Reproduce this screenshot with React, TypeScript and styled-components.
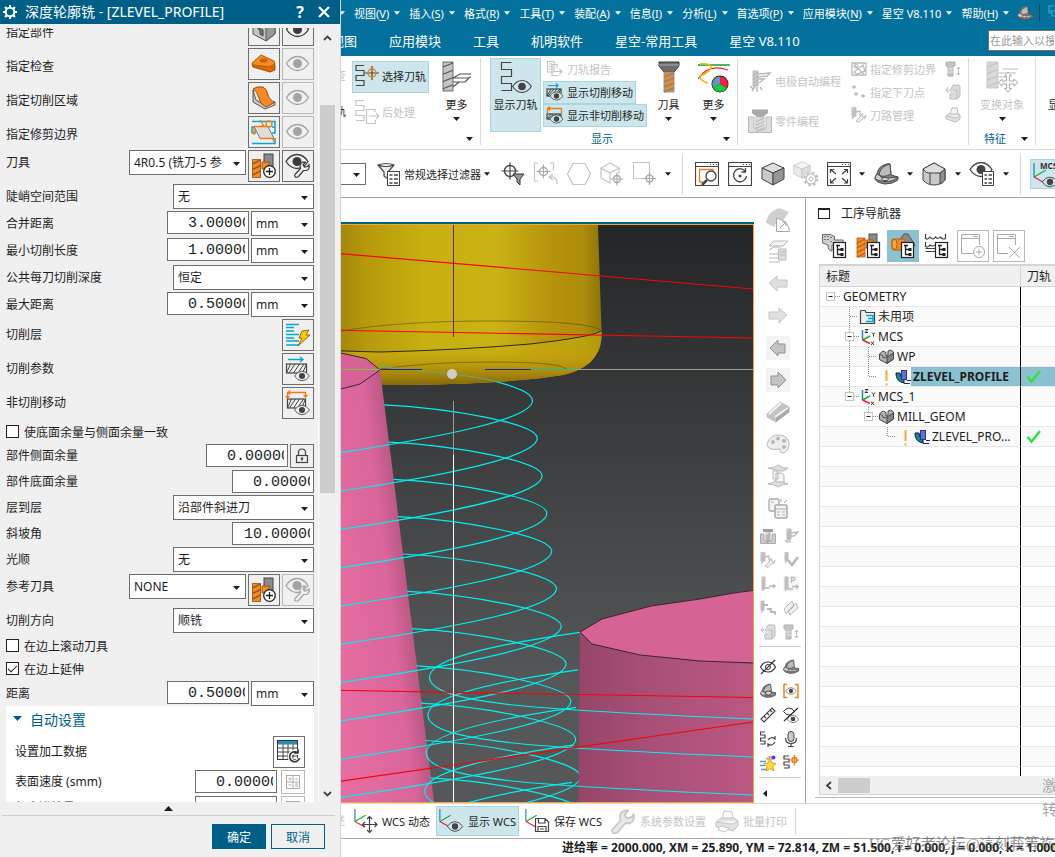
import React from 'react';
import styled, { createGlobalStyle, css } from 'styled-components';

const ui = `"Noto Sans", "Noto Sans CJK SC", sans-serif`;
const dim = '#c4c4c4';
const teal = '#005f87';
const orange = '#ee7d11';
const cyan = '#00a9cf';

const Global = createGlobalStyle`
  *, *::before, *::after { box-sizing: border-box; }
  body { margin: 0; background: #fff; font-family: ${ui}; font-size: 12px; color: #1e1e1e; }
  button, input, select { font-family: inherit; font-size: inherit; color: inherit; margin: 0; border-radius: 0; }
  svg { display: block; flex: none; }
`;

/* ---------- shared drawings ---------- */

const Svg = ({ w, h = w, vb, children }: { w: number; h?: number; vb?: string; children: React.ReactNode }) => (
  <svg width={w} height={h} viewBox={vb || `0 0 ${w} ${h}`} fill="none" aria-hidden="true">
    {children}
  </svg>
);

const Caret = ({ c = '#1e1e1e', w = 7 }: { c?: string; w?: number }) => (
  <Svg w={w} h={4} vb="0 0 7 4"><path d="M0 0H7L3.500 4Z" fill={c} /></Svg>
);

const Eye = ({ x = 0, y = 0, s = 1, c = '#444', bg = 'none' }: { x?: number; y?: number; s?: number; c?: string; bg?: string }) => (
  <g transform={`translate(${x} ${y}) scale(${s})`}>
    <path d="M-11 0Q-6.500-7 0-7Q6.500-7 11 0Q6.500 7 0 7Q-6.500 7-11 0Z" stroke={c} strokeWidth="1.300" fill={bg} />
    <circle r="4.500" fill={c} />
  </g>
);

const Wrench = ({ x = 0, y = 0, s = 1, c = '#444', f = '#f0f0f0' }: { x?: number; y?: number; s?: number; c?: string; f?: string }) => (
  <g transform={`translate(${x} ${y}) scale(${s})`}>
    <path d="M1 13.500L6.500 7.500Q5 3 8.500 1.200L11.500 1L9 4L10.500 6.200L14 5.200L15 3.500Q16 8 12.500 9.500L9.500 9.500L4.500 15.500Q2.500 17 1 15.500Q0.300 14.500 1 13.500Z" fill={f} stroke={c} strokeWidth="1.200" strokeLinejoin="round" />
  </g>
);

const SPath = ({ x = 0, y = 0, w = 8, h = 20, c = '#444' }: { x?: number; y?: number; w?: number; h?: number; c?: string }) => (
  <path d={`M${x + w} ${y}H${x}V${y + h / 4}H${x + w}V${y + h / 2}H${x}V${y + (3 * h) / 4}H${x + w}V${y + h}H${x}`} stroke={c} strokeWidth="1.200" />
);

const Target = ({ x, y, r = 4, c = '#444', d = '#444' }: { x: number; y: number; r?: number; c?: string; d?: string }) => (
  <g>
    <path d={`M${x - r - 3} ${y}H${x + r + 3}M${x} ${y - r - 3}V${y + r + 3}`} stroke={d} strokeWidth="1.200" />
    <circle cx={x} cy={y} r={r} stroke={c} strokeWidth="1.400" />
  </g>
);

const Hatch = ({ x, y, w, h, c = '#444' }: { x: number; y: number; w: number; h: number; c?: string }) => (
  <g>
    <rect x={x} y={y} width={w} height={h} stroke={c} strokeWidth="1.200" />
    {[0, 1, 2, 3, 4].map((i) => {
      const a = x + 3 + (i * (w - 2)) / 4;
      return <path key={i} d={`M${Math.min(a + 1, x + w)} ${y}L${Math.max(a - 5, x)} ${y + h}`} stroke={c} />;
    })}
  </g>
);

const Cube = ({ x = 0, y = 0, s = 1, a = '#c9c9c9', b = '#969696', d = '#dedede', c = '#444' }: { x?: number; y?: number; s?: number; a?: string; b?: string; d?: string; c?: string }) => (
  <g transform={`translate(${x} ${y}) scale(${s})`} stroke={c} strokeWidth="1" strokeLinejoin="round">
    <path d="M1 6L12 1L23 6L12 11Z" fill={d} />
    <path d="M1 6L12 11V23L1 17Z" fill={a} />
    <path d="M23 6L12 11V23L23 17Z" fill={b} />
  </g>
);

const Shoe = ({ x = 0, y = 0, s = 1 }: { x?: number; y?: number; s?: number }) => (
  <g transform={`translate(${x} ${y}) scale(${s})`} stroke="#4a4a4a" strokeWidth="1" strokeLinejoin="round">
    <path d="M1 17Q1 14 3 12Q4 5 10 3Q14 1 16 2L17 13L24 15V18Q19 22 11 22Q3 21 1 17Z" fill="#858585" />
    <path d="M5 13Q6 6 12 3.500L16 2L17 12Q10 16 5 13Z" fill="#bcbcbc" />
    <path d="M3 12L5 13Q8 17 14 16L24 15Q19 20 11 19.500Q4 19 1 17Q1 14 3 12Z" fill="#cecece" />
    <ellipse cx="11" cy="17" rx="3.500" ry="1.500" fill="#e4e4e4" />
  </g>
);

const Drill = ({ x = 0, y = 0, w = 8, h = 22, f = '#c4c4c4', l = '#555', t = 1.2 }: { x?: number; y?: number; w?: number; h?: number; f?: string; l?: string; t?: number }) => (
  <g>
    <rect x={x} y={y} width={w} height={h} fill={f} stroke={l} strokeWidth="0.800" />
    {[0, 1, 2, 3].map((i) => (
      <path key={i} d={`M${x} ${y + 5 + (i * h) / 4}L${x + w} ${y + (i * h) / 4 + 1}`} stroke={l} strokeWidth={t} />
    ))}
  </g>
);

const Box4 = ({ x = 12, y = 12 }: { x?: number; y?: number }) => (
  <g>
    <rect x={x - 0.5} y={y - 0.5} width="12" height="15" fill="#fff" stroke="#222" strokeWidth="1.200" />
    <path d={`M${x + 2} ${y + 2.5}h4M${x + 3.5} ${y + 2.5}v9h4M${x + 3.5} ${y + 6.5}h4`} stroke="#222" strokeWidth="1.300" />
    <rect x={x + 6.5} y={y + 5} width="3" height="3" fill="#222" />
    <rect x={x + 6.5} y={y + 10} width="3" height="3" fill="#222" />
  </g>
);

const Axes = ({ x = 0, y = 0, s = 1 }: { x?: number; y?: number; s?: number }) => (
  <g transform={`translate(${x} ${y}) scale(${s})`} strokeWidth="1.300">
    <path d="M1 0V14" stroke="#2a87a8" />
    <path d="M1 14L13 7" stroke="#1fae3c" />
    <path d="M1 14L12 20" stroke="#ee1c3c" />
  </g>
);

const Printer = ({ c = '#c4c4c4', f = '#e2e2e2' }: { c?: string; f?: string }) => (
  <Svg w={24}>
    <path d="M7 11L9 2L17 3L18 10" fill="#fff" stroke={c} />
    <path d="M1 13L6 9H19L23 12V17L18 22L1 18Z" fill={f} stroke={c} />
    <path d="M1 13L17 15L23 12M5 17L14 19L10 23L3 21Z" fill="#fff" stroke={c} />
  </Svg>
);

/* ---------- dialog icons (30px) ---------- */

const D = ({ children }: { children: React.ReactNode }) => <Svg w={30} vb="1 1 30 30">{children}</Svg>;

const icoEye = (c = '#3c3c3c') => <D><Eye x={15.5} y={15.5} c={c} /></D>;
const icoPart = (
  <D>
    <path d="M5 8L16 3L27 8V20L18 27L5 20Z" fill="#c4c4c4" stroke="#555" />
    <path d="M18 13L27 8V20L18 27Z" fill="#9a9a9a" stroke="#555" />
    <path d="M9 13L15 16V22L12 20V17Z" fill="#777" stroke="#444" />
  </D>
);
const icoCheck = (
  <D>
    <path d="M4 16L13 8L25 14L27 17V22L22 24L5 19Z" fill="#d96a00" stroke="#a94f00" />
    <path d="M4 15L13 7L26 13L27 16L21 19L5 17Z" fill="#f58a1f" stroke="#b85a05" />
    <ellipse cx="15.500" cy="12.500" rx="4" ry="2" fill="#c96000" />
  </D>
);
const icoArea = (
  <D>
    <path d="M5 8V20L17 27L27 23V20L18 24L8 18Z" fill="#c9c9c9" stroke="#555" />
    <path d="M5 7Q8 4 15 5Q19 7 20 13Q22 19 27 20L18 25Q12 22 11 16Q9 9 5 7Z" fill="#f58a1f" stroke="#a94f00" />
  </D>
);
const icoTrim = (
  <D>
    <path d="M4 5.500H27V11M4 17V11H8M4 17H8M4 27.500H27V22M24 11H27V17H24" stroke={cyan} strokeWidth="1.500" />
    <path d="M12 4L27 27M4 18L15 9M6 10V19" stroke={orange} strokeWidth="1.300" />
    <path d="M6 10.500H20L26 22.500H12Z" fill="#dcdcdc" stroke="#777" />
    <path d="M6 10.500H20M12 22.500H26" stroke={orange} strokeWidth="1.300" />
    <circle cx="21" cy="8" r="3" stroke={orange} strokeWidth="1.300" />
  </D>
);
const icoTools = (
  <D>
    <rect x="16" y="4" width="9" height="14" fill="#8b8b8b" stroke="#444" />
    <path d="M14 12H21V19H14Z" fill="#f58a1f" stroke="#a94f00" />
    <rect x="4.500" y="9.500" width="8" height="18" fill="#f58a1f" stroke="#b3621a" />
    <path d="M4.500 14L12.500 10M4.500 19.500L12.500 15.500M4.500 25L12.500 21" stroke="#8a5a30" strokeWidth="1.500" />
    <circle cx="21.500" cy="21.500" r="5.800" fill="#fff" stroke="#222" strokeWidth="1.300" />
    <path d="M18 21.500h7M21.500 18v7" stroke="#222" strokeWidth="1.300" />
  </D>
);
const icoEyeWrench = (c = '#3c3c3c') => <D><Eye x={15} y={11.5} c={c} /><Wrench x={12} y={11} c={c} /></D>;
const icoLayers = (
  <D>
    <path d="M4 5.500H17M4 8.500H12M4 12H12M4 15.500H17M4 19H12M4 22H17M4 26H17" stroke={cyan} strokeWidth="1.500" />
    <path d="M20 12L27 11L24 16L28 16L16 27L20 19L17 19Z" fill="#ffc60a" stroke="#8b6a10" />
  </D>
);
const icoCut = (
  <D>
    <path d="M6 6.500H21M18 4L21 6.500L18 9" stroke={cyan} strokeWidth="1.400" />
    <Hatch x={4.5} y={11} w={20} h={9} />
    <Eye x={20} y={23} s={0.68} bg="#f0f0f0" />
  </D>
);
const icoNonCut = (
  <D>
    <path d="M5.500 11V5.500H23.500V10M8 3.500L6 5.500L8 7.500M3.500 9L5.500 11L7.500 9M21.500 8L23.500 10L25.500 8" stroke={orange} strokeWidth="1.300" />
    <Hatch x={5.5} y={12} w={18} h={9} />
    <Eye x={20} y={23} s={0.68} bg="#f0f0f0" />
  </D>
);
const icoTable = (
  <D>
    <rect x="4.500" y="4.500" width="20" height="19" fill="#fff" stroke="#333" />
    <rect x="5" y="5" width="19" height="3.500" fill="#2290b5" />
    <path d="M5 12H24M5 16H24M5 20H24M10 8V24M15 8V24M20 8V24" stroke="#444" />
    <path d="M25 17A5 5 0 1 0 26.500 22M25 13V17H21" stroke="#fff" strokeWidth="4" />
    <path d="M25 17A5 5 0 1 0 26.500 22M25 13V17H21" stroke="#333" strokeWidth="1.600" />
  </D>
);

/* ---------- dialog ---------- */

const Shell = styled.div`
  display: flex;
  height: 100vh;
  overflow: hidden;
`;

const Dialog = styled.section`
  flex: none;
  width: 341px;
  display: flex;
  flex-direction: column;
  background: #f0f0f0;
  border-right: 1px solid #d4d4d4;
  z-index: 1;
`;

const TitleBar = styled.header`
  height: 24px;
  flex: none;
  display: flex;
  align-items: center;
  gap: 8px;
  padding: 0 8px 0 3px;
  background: ${teal};
  color: #fff;
`;

const Title = styled.h1`
  margin: 0;
  flex: 1;
  font-size: 14px;
  line-height: 24px;
  font-weight: 400;
  white-space: nowrap;
`;

const TitleButton = styled.button`
  width: 16px;
  height: 24px;
  padding: 0;
  border: 0;
  background: none;
  color: #fff;
  font-size: 16px;
  font-weight: 700;
  line-height: 24px;
  display: grid;
  place-items: center;
`;

const DialogBody = styled.div`
  flex: 1;
  min-height: 0;
  margin-top: 4px;
  display: flex;
`;

const FormClip = styled.div`
  flex: 1;
  padding: 0 4px 0 6px;
  overflow: hidden;
  border-right: 1px solid #fff;
`;

const Form = styled.div`
  margin-top: -14px;
`;

const Row = styled.div<{ $h?: number; $low?: boolean; $gap?: number }>`
  display: flex;
  align-items: flex-start;
  gap: ${(p) => p.$gap || 2}px;
  height: ${(p) => p.$h || 25}px;
  margin-bottom: 2px;
  > label, > span { line-height: ${(p) => (p.$low ? 38 : p.$h || 25)}px; }
`;

const Label = styled.label`
  flex: 1;
  white-space: nowrap;
`;

const ShortLine = styled.span`
  display: block;
  line-height: 25px;
`;

const Check = styled.label`
  display: flex;
  align-items: center;
  gap: 5px;
  height: 21px;
  margin-bottom: 2px;
  input {
    appearance: none;
    width: 13px;
    height: 13px;
    border: 1px solid #222;
    background: #fff;
    display: grid;
    place-items: center;
  }
  input:checked::after {
    content: '';
    width: 9px;
    height: 5px;
    border: solid #222;
    border-width: 0 0 1px 1px;
    transform: rotate(-45deg);
    margin-bottom: 3px;
  }
`;

const SelectBox = styled.span<{ $w: number; $h?: number }>`
  position: relative;
  flex: none;
  width: ${(p) => p.$w}px;
  height: ${(p) => p.$h || 25}px;
  border: 1px solid #6e6e6e;
  background: #fff;
  select {
    display: block;
    appearance: none;
    width: 100%;
    height: 100%;
    border: 0;
    padding: 0 18px 0 4px;
    background: transparent;
    text-overflow: clip;
  }
  svg {
    position: absolute;
    right: 5px;
    top: calc(50% - 1px);
    pointer-events: none;
  }
`;

const NumberBox = styled.input<{ $lead?: number }>`
  width: 82px;
  height: 23px;
  border: 1px solid #6e6e6e;
  background: #fff;
  padding: 2px 3px 0 ${(p) => p.$lead || 20}px;
  font-family: "Liberation Mono", monospace;
  font-size: 15px;
`;

const IconButton = styled.button<{ $s?: number }>`
  width: ${(p) => p.$s || 32}px;
  height: ${(p) => p.$s || 32}px;
  flex: none;
  padding: 0;
  border: 1px solid #6e6e6e;
  background: #f0f0f0;
  display: grid;
  place-items: center;
  &:disabled { border-color: #b9b9b9; }
`;

const Group = styled.fieldset`
  margin: -2px 0 0;
  border: 0;
  padding: 0 9px;
  min-width: 0;
  background: #fff;
  height: 140px;
  ${IconButton} { background: #fff; }
`;

const GroupTitle = styled.button`
  display: flex;
  align-items: center;
  gap: 8px;
  height: 25px;
  margin: 0 0 5px -2px;
  padding: 0;
  border: 0;
  background: none;
  color: ${teal};
  font-size: 14px;
`;

const ScrollTrack = styled.div`
  width: 16px;
  margin-right: 5px;
  display: flex;
  flex-direction: column;
  align-items: center;
  padding: 7px 0 5px;
`;

const ScrollThumb = styled.div`
  width: 15px;
  height: 388px;
  margin: 64px 0 auto;
  background: #cdcdcd;
`;

const Footer = styled.footer`
  flex: none;
  height: 55px;
  display: flex;
  flex-direction: column;
`;

const Fold = styled.button`
  height: 14px;
  margin: 0 5px 8px 2px;
  padding: 0;
  border: 0;
  border-bottom: 1px solid #cfcfcf;
  background: none;
  display: grid;
  place-items: center;
`;

const Actions = styled.div`
  display: flex;
  justify-content: flex-end;
  gap: 5px;
  padding-right: 15px;
`;

const Action = styled.button<{ $main?: boolean }>`
  width: 54px;
  height: 25px;
  padding: 0;
  border: 1px solid ${teal};
  background: ${(p) => (p.$main ? teal : '#f0f0f0')};
  color: ${(p) => (p.$main ? '#fff' : teal)};
`;

const Select = ({ id, w, h, value, label }: { id: string; w: number; h?: number; value: string; label?: string }) => (
  <SelectBox $w={w} $h={h}>
    <select id={id} aria-label={label} defaultValue={value}><option>{value}</option></select>
    <Caret />
  </SelectBox>
);

const SelectRow = ({ id, label, value }: { id: string; label: string; value: string }) => (
  <Row><Label htmlFor={id}>{label}</Label><Select id={id} w={141} value={value} /></Row>
);

const LengthRow = ({ id, label, value }: { id: string; label: string; value: string }) => (
  <Row>
    <Label htmlFor={id}>{label}</Label>
    <NumberBox id={id} defaultValue={value} />
    <SelectBox $w={63}>
      <select aria-label={`${label} 单位`} defaultValue="mm"><option>mm</option></select>
      <Caret />
    </SelectBox>
  </Row>
);

const PickRow = ({ label, icon, live }: { label: string; icon: React.ReactNode; live?: boolean }) => (
  <Row $h={32} $low>
    <Label as="span">{label}</Label>
    <IconButton aria-label={label}>{icon}</IconButton>
    <IconButton aria-label="显示" disabled={!live}>{icoEye(live ? '#3c3c3c' : '#a3a3a3')}</IconButton>
  </Row>
);

const ToolRow = ({ id, label, value, live }: { id: string; label: string; value: string; live?: boolean }) => (
  <Row $h={32}>
    <Label htmlFor={id}><ShortLine>{label}</ShortLine></Label>
    <Select id={id} w={117} value={value} />
    <IconButton aria-label="新建刀具">{icoTools}</IconButton>
    <IconButton aria-label="编辑刀具" disabled={!live}>{icoEyeWrench(live ? '#3c3c3c' : '#a3a3a3')}</IconButton>
  </Row>
);

const ActionRow = ({ label, icon }: { label: string; icon: React.ReactNode }) => (
  <Row $h={32}><Label as="span">{label}</Label><IconButton aria-label={label}>{icon}</IconButton></Row>
);

const CalcRow = ({ id, label }: { id: string; label: string }) => (
  <Row $h={24} $gap={4}>
    <Label htmlFor={id}>{label}</Label>
    <NumberBox id={id} defaultValue="0.00000" />
    <IconButton $s={24} disabled aria-label={`计算${label}`}>
      <Svg w={16}>
        <rect x="1.500" y="1.500" width="13" height="13" stroke="#aaa" />
        <path d="M8 2V14M2 8H14M3.500 5H6.500M5 3.500V6.500M10 5H13M3.500 11H6.500M10 10H13M10 12H13" stroke="#aaa" />
      </Svg>
    </IconButton>
  </Row>
);

const ProfileDialog = () => (
  <Dialog aria-label="深度轮廓铣">
    <TitleBar>
      <Svg w={14}>
        <circle cx="7" cy="7" r="4.300" stroke="#fff" strokeWidth="2" />
        <path d="M7 0V3M7 11V14M0 7H3M11 7H14M2 2L4 4M10 10L12 12M2 12L4 10M10 4L12 2" stroke="#fff" strokeWidth="2" />
      </Svg>
      <Title>深度轮廓铣 - [ZLEVEL_PROFILE]</Title>
      <TitleButton aria-label="帮助">?</TitleButton>
      <TitleButton aria-label="关闭">
        <Svg w={12}><path d="M1 1L11 11M11 1L1 11" stroke="#fff" strokeWidth="2.200" /></Svg>
      </TitleButton>
    </TitleBar>
    <DialogBody>
      <FormClip>
        <Form>
          <PickRow label="指定部件" icon={icoPart} live />
          <PickRow label="指定检查" icon={icoCheck} />
          <PickRow label="指定切削区域" icon={icoArea} />
          <PickRow label="指定修剪边界" icon={icoTrim} />
          <ToolRow id="tool" label="刀具" value="4R0.5 (铣刀-5 参" live />
          <SelectRow id="steep" label="陡峭空间范围" value="无" />
          <LengthRow id="merge" label="合并距离" value="3.00000" />
          <LengthRow id="minlen" label="最小切削长度" value="1.00000" />
          <SelectRow id="depth" label="公共每刀切削深度" value="恒定" />
          <LengthRow id="maxdist" label="最大距离" value="0.50000" />
          <ActionRow label="切削层" icon={icoLayers} />
          <ActionRow label="切削参数" icon={icoCut} />
          <ActionRow label="非切削移动" icon={icoNonCut} />
          <Check><input type="checkbox" />使底面余量与侧面余量一致</Check>
          <Row $h={24}>
            <Label htmlFor="side">部件侧面余量</Label>
            <NumberBox id="side" defaultValue="0.00000" />
            <IconButton $s={24} aria-label="锁定">
              <Svg w={16}><rect x="2.500" y="7.500" width="11" height="7" stroke="#444" strokeWidth="1.200" /><path d="M4.500 7V4.500Q4.500 1 8 1Q11.500 1 11.500 4.500V7" stroke="#444" strokeWidth="1.200" /><circle cx="8" cy="10.500" r="1.300" fill="#444" /><path d="M8 11V13" stroke="#444" /></Svg>
            </IconButton>
          </Row>
          <Row $h={23}><Label htmlFor="floor">部件底面余量</Label><NumberBox id="floor" defaultValue="0.00000" /></Row>
          <SelectRow id="level" label="层到层" value="沿部件斜进刀" />
          <Row $h={23}><Label htmlFor="ramp">斜坡角</Label><NumberBox id="ramp" $lead={11} defaultValue="10.00000" /></Row>
          <SelectRow id="smooth" label="光顺" value="无" />
          <ToolRow id="reftool" label="参考刀具" value="NONE" />
          <SelectRow id="dir" label="切削方向" value="顺铣" />
          <Check><input type="checkbox" />在边上滚动刀具</Check>
          <Check><input type="checkbox" defaultChecked />在边上延伸</Check>
          <LengthRow id="dist" label="距离" value="0.50000" />
          <Group>
            <GroupTitle><Svg w={9} h={5}><path d="M0 0H9L4.500 5Z" fill={teal} /></Svg>自动设置</GroupTitle>
            <ActionRow label="设置加工数据" icon={icoTable} />
            <CalcRow id="speed" label="表面速度 (smm)" />
            <CalcRow id="feed" label="每齿进给量" />
          </Group>
        </Form>
      </FormClip>
      <ScrollTrack>
        <Svg w={9} h={6}><path d="M1 5L4.500 1.500L8 5" stroke="#444" strokeWidth="1.800" /></Svg>
        <ScrollThumb />
        <Svg w={9} h={6}><path d="M1 1L4.500 4.500L8 1" stroke="#444" strokeWidth="1.800" /></Svg>
      </ScrollTrack>
    </DialogBody>
    <Footer>
      <Fold aria-label="折叠"><Svg w={9} h={5}><path d="M0 5H9L4.500 0Z" fill="#1e1e1e" /></Svg></Fold>
      <Actions>
        <Action $main>确定</Action>
        <Action>取消</Action>
      </Actions>
    </Footer>
  </Dialog>
);

/* ---------- application frame ---------- */

const AppWindow = styled.main`
  flex: 1;
  min-width: 0;
  margin-left: -20px;
  display: flex;
  flex-direction: column;
  overflow: hidden;
  background: #fff;
  font-size: 11px;
`;

const MenuBar = styled.nav`
  height: 28px;
  flex: none;
  display: flex;
  align-items: center;
  padding: 0 0 2px 18px;
  background: #03719b;
  color: #fff;
  overflow: hidden;
`;

const MenuItem = styled.button`
  flex: none;
  display: flex;
  align-items: center;
  gap: 5px;
  padding: 0 0 0 9px;
  border: 0;
  background: none;
  white-space: nowrap;
  u { text-underline-offset: 2px; }
`;

const MenuMark = styled.span`
  flex: none;
  margin-left: 8px;
`;

const MenuSep = styled.span`
  flex: none;
  width: 1px;
  height: 18px;
  margin-left: 6px;
  background: #1f4256;
`;

const TabBar = styled.div`
  height: 28px;
  flex: none;
  display: flex;
  align-items: center;
  gap: 32px;
  padding: 0 0 4px 10px;
  background: #03719b;
  overflow: hidden;
`;

const Tab = styled.button`
  flex: none;
  padding: 0;
  border: 0;
  background: none;
  color: #fff;
  font-size: 13px;
  white-space: nowrap;
`;

const Search = styled.input`
  width: 67px;
  height: 21px;
  flex: none;
  margin-left: auto;
  padding: 0 1px;
  border: 1px solid #6e6e6e;
  border-right: 0;
  background: #fff;
  text-overflow: clip;
  &::placeholder { color: #9a9a9a; opacity: 1; }
`;

const Ribbon = styled.div`
  height: 94px;
  flex: none;
  display: flex;
  border-bottom: 1px solid #d9d9d9;
`;

const RibbonGroup = styled.section<{ $w: number }>`
  flex: none;
  width: ${(p) => p.$w}px;
  margin: 2px 0 4px;
  display: flex;
  flex-direction: column;
  justify-content: space-between;
  border-right: 1px solid #d9d9d9;
  overflow: hidden;
`;

const Tools = styled.div<{ $pad?: number }>`
  display: flex;
  height: 74px;
  padding-left: ${(p) => p.$pad || 0}px;
`;

const GroupFoot = styled.div`
  height: 13px;
  display: flex;
  align-items: center;
  padding-right: 7px;
  color: ${teal};
  line-height: 13px;
  span { flex: 1; text-align: center; }
`;

const Stack = styled.div<{ $w: number; $gap?: number; $top?: number; $left?: number }>`
  flex: none;
  width: ${(p) => p.$w}px;
  padding: ${(p) => p.$top || 0}px 0 0 ${(p) => p.$left || 0}px;
  display: flex;
  flex-direction: column;
  align-items: flex-start;
  gap: ${(p) => p.$gap || 0}px;
`;

const lit = css`
  background: #cde6eb;
  border-color: #a9d5de;
`;

const Tool = styled.button<{ $on?: boolean; $h?: number }>`
  flex: none;
  height: ${(p) => p.$h || 23}px;
  display: flex;
  align-items: center;
  gap: 3px;
  padding: 0 2px 2px;
  border: 1px solid transparent;
  background: none;
  white-space: nowrap;
  ${(p) => p.$on && lit}
  &:disabled { color: ${dim}; }
`;

const BigTool = styled.button<{ $w: number; $on?: boolean }>`
  flex: none;
  width: ${(p) => p.$w}px;
  height: 74px;
  display: flex;
  flex-direction: column;
  align-items: center;
  gap: 4px;
  padding: 2px 0 0;
  border: 1px solid transparent;
  background: none;
  line-height: 16px;
  white-space: nowrap;
  ${(p) => p.$on && lit}
  &:disabled { color: ${dim}; }
`;

const CutText = styled.div<{ $w: number; $pad?: number }>`
  flex: none;
  width: ${(p) => p.$w}px;
  padding-right: ${(p) => p.$pad || 0}px;
  display: flex;
  flex-direction: column;
  text-align: right;
  line-height: 36px;
  color: ${dim};
  b { font-weight: 400; color: #1e1e1e; }
`;

const SelectBar = styled.div`
  height: 48px;
  flex: none;
  display: flex;
  align-items: center;
  border-bottom: 1px solid #a9a9a9;
  overflow: hidden;
`;

const Slot = styled.button<{ $w: number }>`
  flex: none;
  width: ${(p) => p.$w}px;
  height: 32px;
  padding: 0;
  border: 0;
  background: none;
  display: grid;
  place-items: center;
`;

const FilterButton = styled.button`
  flex: none;
  width: 130px;
  display: flex;
  align-items: center;
  gap: 3px;
  padding: 0 0 0 11px;
  border: 0;
  background: none;
  white-space: nowrap;
`;

const BarSep = styled.span<{ $l: number; $r: number; $h?: number }>`
  flex: none;
  width: 1px;
  height: ${(p) => p.$h || 40}px;
  margin: 0 ${(p) => p.$r}px 0 ${(p) => p.$l}px;
  background: #d4d4d4;
`;

const McsButton = styled.button`
  flex: none;
  width: 38px;
  height: 30px;
  padding: 0;
  border: 1px solid #a9d5de;
  background: #cde6eb;
`;

const Work = styled.div`
  flex: 1;
  min-height: 0;
  display: flex;
`;

const ViewColumn = styled.div`
  flex: 1;
  min-width: 0;
  padding-top: 24px;
  display: flex;
`;

const ViewEdge = styled.div`
  flex: 1;
  min-width: 0;
  border-top: 2px solid ${teal};
  display: flex;
`;

const View = styled.div`
  flex: 1;
  min-width: 0;
  border: 1px solid #f5a13c;
  svg { width: 100%; height: 100%; }
`;

const Strip = styled.aside`
  flex: none;
  width: 52px;
  padding: 6px 4px 0 1px;
  border-right: 1px solid #a9a9a9;
  display: flex;
  flex-direction: column;
`;

const StripBig = styled.button`
  height: 32px;
  padding: 0;
  border: 0;
  background: none;
  display: grid;
  place-items: center;
`;

const StripPair = styled.div`
  display: grid;
  grid-template-columns: 23px 23px;
  padding-left: 1px;
  button {
    height: 24px;
    padding: 0;
    border: 0;
    background: none;
    display: grid;
    place-items: center;
  }
`;

const StripLine = styled.hr`
  width: 42px;
  margin: 2px 0 8px 4px;
  border: 0;
  border-top: 1px solid #cfcfcf;
`;

const StripMore = styled.button`
  align-self: flex-start;
  margin-left: 8px;
  padding: 4px 0;
  border: 0;
  background: none;
`;

const BottomBar = styled.div`
  height: 35px;
  flex: none;
  display: flex;
  align-items: center;
  border-top: 1px solid #dcdcdc;
  overflow: hidden;
`;

const BottomTool = styled(Tool)`
  height: 30px;
  gap: 4px;
  padding: 0 2px;
  margin-right: 3px;
`;

const Status = styled.div`
  height: 19px;
  flex: none;
  padding-left: 241px;
  border-top: 1px solid #a9a9a9;
  font-size: 12px;
  line-height: 18px;
  font-weight: 700;
  white-space: nowrap;
  overflow: hidden;
`;

/* ---------- 3D scene ---------- */

const loopPath = (k: number) => {
  const sy = 367.5 + 37.3 * k;
  const sx = 380 + 0.123 * (sy - 370);
  const ax = 532.5 + 4.8 * k;
  const ay = 400.5 + 37.6 * k;
  const ey = 452.7 + 38.3 * k;
  return `M${sx} ${sy}C${sx + 66} ${sy + 3.5} ${ax - 1} ${ay - 15} ${ax} ${ay}C${ax} ${ay + 19} ${ax - 90} ${ay + 37} 341 ${ey}L321 ${ey + 3}`;
};

const rightLoop = (k: number) => {
  const sx = 580 - 2 * k;
  const sy = 632.3 + 37.5 * k;
  const ax = 429.5 - 1.6 * k;
  const ay = 677 + 38 * k;
  return `M${sx} ${sy}C${sx - 70} ${sy + 10} ${ax} ${ay - 20} ${ax} ${ay}C${ax} ${ay + 27} 540 ${ay + 33} 753 ${ay + 42}`;
};

const Scene = () => (
  <svg viewBox="322 225 431 577" preserveAspectRatio="xMinYMin slice" fill="none" role="img" aria-label="刀轨视图">
    <defs>
      <linearGradient id="bg" gradientUnits="userSpaceOnUse" x1="0" y1="225" x2="0" y2="802">
        <stop offset="0" stopColor="#242526" /><stop offset="0.5" stopColor="#444546" /><stop offset="0.8" stopColor="#555758" /><stop offset="1" stopColor="#555758" />
      </linearGradient>
      <linearGradient id="gold" gradientUnits="userSpaceOnUse" x1="341" y1="0" x2="602" y2="0">
        <stop offset="0" stopColor="#a5870c" /><stop offset="0.1" stopColor="#b79a0d" /><stop offset="0.32" stopColor="#c7b00f" /><stop offset="0.6" stopColor="#c9b214" /><stop offset="0.78" stopColor="#b8960d" /><stop offset="0.93" stopColor="#ad8b0c" /><stop offset="1" stopColor="#8c740b" />
      </linearGradient>
      <linearGradient id="rim" gradientUnits="userSpaceOnUse" x1="0" y1="335" x2="0" y2="385">
        <stop offset="0" stopColor="#c9b814" stopOpacity="0.500" /><stop offset="0.4" stopColor="#c7a70f" stopOpacity="0.700" /><stop offset="0.75" stopColor="#ab8a0c" /><stop offset="1" stopColor="#84690b" />
      </linearGradient>
      <linearGradient id="pinkL" gradientUnits="userSpaceOnUse" x1="341" y1="620" x2="414" y2="611">
        <stop offset="0" stopColor="#e56ca1" /><stop offset="0.7" stopColor="#d9659a" /><stop offset="1" stopColor="#b55681" />
      </linearGradient>
      <linearGradient id="pinkR" gradientUnits="userSpaceOnUse" x1="575" y1="0" x2="753" y2="0">
        <stop offset="0" stopColor="#944567" /><stop offset="0.4" stopColor="#a84f77" /><stop offset="1" stopColor="#ba5883" />
      </linearGradient>
    </defs>
    <rect x="321" y="225" width="1600" height="1200" fill="url(#bg)" />
    <path d="M321 225H598L601.500 331Q602.500 345 596 355Q588 369 563 375Q500 385 381 385H321Z" fill="url(#gold)" />
    <path d="M321 351Q460 355 540 343Q590 336 601.500 331Q602.500 345 596 355Q588 369 563 375Q500 385 381 385H321Z" fill="url(#rim)" />
    <path d="M341 331Q400 321 490 321Q595 321 601 331" stroke="#4a4208" strokeOpacity="0.500" />
    <path d="M321 350Q341 351 380 352Q460 350 530 344Q592 337 601 331" stroke="#2b2a1c" />
    <path d="M380 369Q430 362 490 362Q560 362 566 369" stroke="#4a4208" strokeOpacity="0.500" />
    <path d="M321 386V350L341 353L366 358.500L380 370L434 802H321Z" fill="url(#pinkL)" />
    <path d="M321 350L341 353L366 358.500L380 370L360 384L321 393Z" fill="#d56397" />
    <path d="M341 353L366 358.500L380 370L360 384L341 389" stroke="#33262c" />
    <path d="M378 366.500Q415 370 452 374Q480 377 497 382" stroke="#5fae7a" />
    {Array.from({ length: 11 }, (_, i) => <path key={i} d={loopPath(i + 1)} stroke="#00f0f0" strokeWidth="1.200" />)}
    <path d="M497 382Q532 391 532.500 400.500C532.500 419 446 436 341 452.700L321 456" stroke="#00f0f0" strokeWidth="1.200" />
    <path d="M580 632L602 619L651 606L700 599L734 593L753 590.500H1600V1400H572Z" fill="url(#pinkR)" />
    <path d="M580 632L602 619L651 606L700 599L734 593L753 590.500L1600 560V680L753 663L700 661L640 655L592 644Z" fill="#d56394" />
    <path d="M753 590.500L734 593L700 599L651 606L602 619L580 632L592 644L640 655L700 661L753 663" stroke="#3a2430" />
    {[0, 1, 2, 3, 4].map((k) => <path key={k} d={rightLoop(k)} stroke="#00f0f0" strokeWidth="1.200" />)}
    <path d="M321 252L753 289M321 330L753 338M321 690L753 697.500M321 784L753 722" stroke="#f50505" strokeWidth="1.200" />
    <path d="M453.500 225V337" stroke="#5b2a78" />
    <path d="M341 369.500H380" stroke="#7fc234" />
    <path d="M380 369.500H422M485 369.500H531" stroke="#1b2a9a" />
    <path d="M531 369.500H575" stroke="#20c0a0" />
    <path d="M575 369.500H1600" stroke="#98a08c" />
    <path d="M453.500 401V455" stroke="#999" />
    <path d="M453.500 455V1400" stroke="#fff" />
    <circle cx="452" cy="374" r="5" fill="#cfcfcf" />
  </svg>
);

/* ---------- navigator ---------- */

const Navigator = styled.aside`
  flex: none;
  width: 249px;
  display: flex;
  flex-direction: column;
  overflow: hidden;
  font-size: 12px;
`;

const NavTitle = styled.h2`
  margin: 0;
  height: 30px;
  display: flex;
  align-items: center;
  gap: 11px;
  padding-left: 12px;
  font-size: 12px;
  font-weight: 400;
`;

const NavTools = styled.div`
  height: 36px;
  display: flex;
  gap: 2px;
  padding: 2px 0 0 13px;
`;

const NavTool = styled.button<{ $on?: boolean; $boxed?: boolean }>`
  width: 32px;
  height: 32px;
  flex: none;
  padding: 0;
  margin-left: ${(p) => (p.$boxed ? 2 : 0)}px;
  border: 1px solid ${(p) => (p.$on ? '#8cc1d1' : p.$boxed ? '#b9b9b9' : 'transparent')};
  background: ${(p) => (p.$on ? '#8cc1d1' : '#fff')};
  display: grid;
  place-items: center;
`;

const TreeFrame = styled.div`
  flex: 1;
  min-height: 0;
  margin: 0 0 8px 13px;
  border: solid #d4d4d4;
  border-width: 2px 0 1px 1px;
  display: flex;
  flex-direction: column;
`;

const TreeClip = styled.div`
  flex: 1;
  min-height: 0;
  overflow: hidden;
`;

const Tree = styled.table`
  width: 300px;
  table-layout: fixed;
  border-collapse: separate;
  border-spacing: 0;
  th, td { padding: 0; text-align: left; height: 20px; border-bottom: 1px solid #e8e8e8; white-space: nowrap; overflow: hidden; }
  th { background: #f0f0f0; font-weight: 400; height: 21px; padding-left: 6px; border-bottom: 1px solid #d4d4d4; }
  th:first-child { width: 201px; border-right: 1px solid #d4d4d4; }
  td:first-child { border-right: 1px solid #000; }
  td + td { padding-left: 5px; }
  tbody tr:nth-child(even) { background: #fafafa; }
`;

const Node = styled.div`
  display: flex;
  align-items: center;
  height: 19px;
  padding-left: 1px;
`;

const NodeText = styled.span<{ $gap?: number; $on?: boolean }>`
  flex: 1;
  line-height: 19px;
  padding-left: ${(p) => p.$gap || 0}px;
  font-weight: ${(p) => (p.$on ? 700 : 400)};
  background: ${(p) => (p.$on ? '#8cc1d1' : 'none')};
`;

const TickCell = styled.td<{ $on?: boolean }>`
  background: ${(p) => (p.$on ? '#8cc1d1' : 'none')};
`;

const NavScroll = styled.div`
  height: 18px;
  flex: none;
  display: flex;
  align-items: center;
  gap: 6px;
  padding-left: 5px;
  background: #f0f0f0;
  i { width: 32px; height: 15px; background: #cdcdcd; }
`;

const NavEnd = styled.div`
  margin: -6px 0 5px 9px;
  flex: none;
  border-top: 1px solid #b9b9b9;
`;

const Guide = ({ t }: { t: string }) => (
  <Svg w={19} h={19}>
    <g stroke="#8a8a8a" strokeDasharray="1 1">
      {(t === 'pipe' || t === 'tee' || t === 'boxpipe') && <path d="M9.500 0V19" />}
      {(t === 'elbow' || t === 'boxend') && <path d="M9.500 0V10" />}
      {(t === 'tee' || t === 'elbow') && <path d="M10 9.500H18" />}
      {t.startsWith('box') && <path d="M14 9.500H19" />}
    </g>
    {t.startsWith('box') && (
      <g><rect x="5.500" y="5.500" width="8" height="8" fill="#fff" stroke="#c4c4c4" /><path d="M7.500 9.500H11.500" stroke="#222" /></g>
    )}
  </Svg>
);

const McsIco = () => (
  <Svg w={19} h={18}>
    <path d="M3.500 2V12" stroke="#2a87a8" strokeWidth="1.500" />
    <path d="M3.500 12L11 8" stroke="#1fae3c" strokeWidth="1.500" />
    <path d="M3.500 12L11 15.500" stroke="#ee1c3c" strokeWidth="1.500" />
    <path d="M6 1.500H9L6 4.500H9M13 4.500L14.500 6.500L16 4.500M14.500 6.500V8.500M12 13.500L15 17M15 13.500L12 17" stroke="#333" />
  </Svg>
);
const PartIco = () => (
  <Svg w={19} h={18}>
    <path d="M1.500 6L5 3L8 4.500V8L10 7V3L12.500 2L15.500 4V11L9 15.500L1.500 11.500Z" fill="#b5b5b5" stroke="#444" />
    <path d="M9 9L15.500 5V11L9 15.500Z" fill="#858585" stroke="#444" />
    <path d="M1.500 6L5 8L5 10L9 9" stroke="#555" />
  </Svg>
);
const FolderIco = () => (
  <Svg w={19} h={18}>
    <path d="M1.500 3V15.500H15.500V4.500H7L6 2.500H2.500Z" fill="#eee" stroke="#444" strokeWidth="1.200" />
    <path d="M7 7.500H14V13.500H7M9 10.500H14" stroke={cyan} strokeWidth="1.500" />
  </Svg>
);
const OpIco = () => (
  <Svg w={16} h={18}>
    <path d="M1 5Q1 12 6 14L9 15V12Q5 10 5 5Z" fill="#0f8f84" stroke="#0a1a2a" />
    <rect x="6.500" y="2.500" width="5" height="9" fill="#5f6fe0" stroke="#3030a0" />
    <path d="M12 12.500H16M9 15.500H15" stroke="#2020b0" />
  </Svg>
);
const Bang = () => (
  <Svg w={17} h={18}><path d="M8.500 2V13M8.500 15.500V17.500" stroke="#f5a93c" strokeWidth="2" /></Svg>
);
const Tick = () => (
  <Svg w={16} h={15}><path d="M1.500 8L5.500 12.500L14 2" stroke="#2fe23b" strokeWidth="2.500" /></Svg>
);

type NodeRow = { g: string[]; icon?: React.ReactNode; text: string; bang?: boolean; on?: boolean; tick?: boolean; gap?: number };
const nodes: NodeRow[] = [
  { g: ['box'], text: 'GEOMETRY', gap: 3 },
  { g: ['', 'tee'], icon: <FolderIco />, text: '未用项' },
  { g: ['', 'boxpipe'], icon: <McsIco />, text: 'MCS' },
  { g: ['', 'pipe', 'tee'], icon: <PartIco />, text: 'WP' },
  { g: ['', 'pipe', 'elbow'], icon: <OpIco />, text: 'ZLEVEL_PROFILE', bang: true, on: true, tick: true, gap: 2 },
  { g: ['', 'boxend'], icon: <McsIco />, text: 'MCS_1' },
  { g: ['', '', 'boxend'], icon: <PartIco />, text: 'MILL_GEOM' },
  { g: ['', '', '', 'elbow'], icon: <OpIco />, text: 'ZLEVEL_PRO...', bang: true, tick: true, gap: 2 },
];

const treeTool = (back: React.ReactNode) => <Svg w={30}>{back}<Box4 x={14} y={12} /></Svg>;

const OperationNavigator = () => (
  <Navigator aria-label="工序导航器">
    <NavTitle><Svg w={12} h={11}><rect x="0.500" y="0.500" width="11" height="10" stroke="#222" /><path d="M0 1H12" stroke="#222" strokeWidth="2" /></Svg>工序导航器</NavTitle>
    <NavTools>
      <NavTool aria-label="程序顺序视图">
        {treeTool(<g><path d="M2.500 3.500H10.500L14.500 5.500V9H23V14H12V20Q8 20 8 14L2.500 12Z" fill="#d0d0d0" stroke="#666" /><path d="M5 5V6M8 5V6M5 8V9M8 8V9M11 6V7M11 10V11" stroke="#555" strokeWidth="1.500" /></g>)}
      </NavTool>
      <NavTool aria-label="机床视图">
        {treeTool(<g><rect x="15" y="3" width="8" height="12" fill="#8b8b8b" stroke="#555" /><path d="M12 9H19V17H12Z" fill="#f58a1f" stroke="#b85a05" /><Drill x={3} y={7} w={8} h={19} f="#f58a1f" l="#b3621a" /></g>)}
      </NavTool>
      <NavTool $on aria-label="几何视图">
        {treeTool(<g><path d="M12 8L16 3H20L27 14L18 25Z" fill="#8b8b8b" stroke="#555" /><path d="M4 9Q4 8 6 8H17V19H6Q4 19 4 17Z" fill="#f58a1f" stroke="#b85a05" /><ellipse cx="6.500" cy="13.500" rx="2.500" ry="5" fill="#ffa23f" stroke="#b85a05" /></g>)}
      </NavTool>
      <NavTool aria-label="加工方法视图">
        {treeTool(<path d="M3.500 3V7.500Q6 9 8 6Q11 10 13.500 6Q16 9 18 6Q21 9 23.500 7.500V3M3.500 11V15.500Q6 17 8 14Q10 16 13 14M3.500 17.500H13M3.500 20.500H13" stroke="#444" strokeWidth="1.200" />)}
      </NavTool>
      <NavTool $boxed disabled aria-label="新建"><Svg w={30}><path d="M15 22.500H3.500V3.500H21.500V14M3.500 7.500H21.500M15 5.500H20" stroke="#aaa" /><circle cx="21" cy="21" r="5.500" stroke="#aaa" /><path d="M18 21H24M21 18V24" stroke="#aaa" /></Svg></NavTool>
      <NavTool $boxed disabled aria-label="删除"><Svg w={30}><path d="M14 22.500H3.500V3.500H21.500V14M3.500 7.500H21.500M15 5.500H20M15 16L26 27M26 16L15 27" stroke="#aaa" /></Svg></NavTool>
    </NavTools>
    <TreeFrame>
      <TreeClip>
        <Tree>
          <thead><tr><th>标题</th><th>刀轨</th></tr></thead>
          <tbody>
            {nodes.map((n) => (
              <tr key={n.text}>
                <td>
                  <Node>
                    {n.g.map((t, i) => <Guide key={i} t={t} />)}
                    {n.bang && <Bang />}
                    {n.icon}
                    <NodeText $gap={n.gap} $on={n.on}>{n.text}</NodeText>
                  </Node>
                </td>
                <TickCell $on={n.on}>{n.tick && <Tick />}</TickCell>
              </tr>
            ))}
            {Array.from({ length: 24 }, (_, i) => <tr key={i}><td /><td /></tr>)}
          </tbody>
        </Tree>
      </TreeClip>
      <NavScroll><Svg w={7} h={9}><path d="M6 1L2 4.500L6 8" stroke="#444" strokeWidth="1.800" /></Svg><i /></NavScroll>
    </TreeFrame>
    <NavEnd />
  </Navigator>
);

/* ---------- ribbon icons ---------- */

const Fan = ({ x = 0, y = 0, c = '#555' }: { x?: number; y?: number; c?: string }) => (
  <path d={`M${x} ${y + 4}L${x + 7} ${y}H${x + 18}M${x} ${y + 4}H${x + 15}L${x + 18} ${y + 3}M${x} ${y + 8}H${x + 12}L${x + 16} ${y + 4}M${x} ${y + 13}L${x + 6} ${y + 8}`} stroke={c} strokeWidth="1.200" />
);

const icoSelPath = <Svg w={24}><SPath x={1} y={1.5} w={8} h={20} /><Target x={17} y={9} c={orange} /></Svg>;
const icoPost = <Svg w={24} h={26}><SPath x={1} y={1.5} w={8} h={20} c={dim} /><path d="M20 13V10.500H11.500V24.500H20.500V21M14 17H24M21 14L24 17L21 20" stroke={dim} strokeWidth="1.200" /></Svg>;
const icoMore = <Svg w={30} h={32}><Drill x={1} y={1} w={10} h={29} /><Fan x={11} y={13} /></Svg>;
const icoShowPath = <Svg w={34} h={32}><SPath x={2.5} y={1.5} w={10} h={28} /><Eye x={23} y={25.5} s={0.85} bg="#cde6eb" /></Svg>;
const icoReport = <Svg w={18}><path d="M1.500 1.500H8V12H1.500ZM6 4.500H11V8M6 4.500V15.500H13M9 11.500H16M13.500 9L16 11.500L13.500 14M3 4H6M3 6.500H6M3 9H6" stroke={dim} strokeWidth="1.200" /></Svg>;
const icoShowCut = <Svg w={18}><path d="M2 2.500H12M10 0.500L12 2.500L10 4.500" stroke={cyan} strokeWidth="1.200" /><Hatch x={1} y={6} w={14} h={7} /><Eye x={10.5} y={13} s={0.6} bg="#cde6eb" /></Svg>;
const icoShowNon = <Svg w={18}><path d="M1.500 7V2.500H15.500V7M4 0.500L2 2.500L4 4.500" stroke={orange} strokeWidth="1.300" /><Hatch x={1} y={8} w={14} h={5} /><Eye x={10.5} y={13} s={0.6} bg="#cde6eb" /></Svg>;
const icoCutter = (
  <Svg w={24} h={32}>
    <path d="M2 1H22V5L17 11H7L2 5Z" fill="#6d6d6d" stroke="#333" />
    <path d="M2 4H22" stroke="#aaa" />
    <Drill x={7} y={11} w={10} h={20} f="#f58a1f" l="#8a8a8a" t={2} />
  </Svg>
);
const icoDisplay = (
  <Svg w={32} h={32}>
    <path d="M0 4H32" stroke="#12a02c" strokeWidth="1.500" />
    <path d="M0 18Q10 2 30 9" stroke="#f01c3c" strokeWidth="1.200" />
    <path d="M2 3Q14 2 13 7Q10 12 2 15Q2 20 10 22" stroke="#f2b70c" strokeWidth="1.500" />
    <circle cx="22" cy="23" r="8.500" fill="#222" />
    <path d="M22 23V15.500A7.500 7.500 0 0 1 28.500 27Z" fill="#ff1c3c" />
    <path d="M22 23L28.500 27A7.500 7.500 0 0 1 15.500 27Z" fill="#12d23c" />
    <path d="M22 23L15.500 27A7.500 7.500 0 0 1 22 15.500Z" fill="#5a9db4" />
  </Svg>
);
const icoElectrode = <Svg w={24}><Drill x={5} y={2} w={5} h={15} f="#ccc" l="#b3b3b3" /><path d="M10 5L22 4L19 7L10 8M10 10H16L11 14M2 17L5 20M4 22L7 18M9 18V23M12 18L14 21" stroke="#bbb" strokeWidth="1.500" /></Svg>;
const icoPartProg = <Svg w={24}><path d="M0.500 8H6V19H18V8H23.500V23.500H0.500Z" fill="#ddd" stroke="#b9b9b9" /><path d="M4 0.500H20V4L15 8H9L4 4Z" fill="#a9a9a9" /><Drill x={8} y={8} w={8} h={13} f="#e2e2e2" l="#bbb" /></Svg>;
const icoTrimS = <Svg w={16}><path d="M1 2H15V14H1ZM3 11L12 4L14 10L6 13ZM3 4L13 13" stroke="#bbb" strokeWidth="1.300" /><circle cx="5" cy="5" r="2" stroke="#bbb" /></Svg>;
const icoPoints = <Svg w={16}><path d="M1 3H5M3 1V5M3 10H7M5 8V12M10 12H14M12 10V14" stroke="#bbb" strokeWidth="1.300" /></Svg>;
const icoManage = <Svg w={16}><Drill x={1} y={0} w={4} h={9} f="#ccc" l="#bdbdbd" /><path d="M5 5L9 4V8" stroke="#bbb" strokeWidth="1.300" /><path d="M5 14L9 10Q9 7 12 6.500L11 9L13 10L15 8.500Q15 12 11.500 12L8 15.500Z" fill="#eee" stroke="#bbb" /></Svg>;
const icoBolt = <Svg w={16}><path d="M1 1H10V5H8V15H3V5H1Z" fill="#c4c4c4" stroke="#b0b0b0" /><path d="M3 8H8M3 11H8" stroke="#eee" /><path d="M13.500 6V14M12 8L13.500 6L15 8M12 12L13.500 14L15 12" stroke="#bbb" /></Svg>;
const icoSim = <Svg w={16}><path d="M6 5L8 1H14L15 3V12L12 15H5V10H8" fill="#ddd" stroke="#bbb" /><path d="M1 6H6V9M8 6H12V15M3 3L1 6L4 9" stroke="#bbb" /></Svg>;
const icoPrintS = <Svg w={16}><path d="M1 9L5 6H13L15 8V12L11 15L1 12Z" fill="#e2e2e2" stroke="#bdbdbd" /><path d="M5 7L7 1H12L13 7ZM1 9L11 11L15 8" fill="#f6f6f6" stroke="#bdbdbd" /></Svg>;
const icoTransform = (
  <Svg w={32} h={32}>
    <Drill x={1} y={1} w={11} h={26} f="#d9d9d9" l="#c0c0c0" />
    <path d="M17 8H32M13 12H30M13 16H20" stroke="#bbb" strokeWidth="1.200" />
    <path d="M22 11L25.500 15H23.500V20H28V18L32 21.500L28 25V23H23.500V27.500H25.500L22 31L18.500 27.500H20.500V23H16V25L12.500 21.500L16 18V20H20.500V15H18.500Z" fill="#fff" stroke="#aaa" />
  </Svg>
);

/* ---------- selection bar icons ---------- */

const icoFilter = <Svg w={24}><path d="M1 3Q9 0 17 3L11 10V17L7 14V10ZM1 3Q9 6 17 3" fill="#eee" stroke="#444" strokeWidth="1.200" /><rect x="10.500" y="9.500" width="12" height="14" fill="#fff" stroke="#444" /><path d="M12.500 13H15.500M17 13H21M12.500 17H15.500M17 17H21M12.500 21H15.500M17 21H21" stroke="#444" strokeWidth="1.500" /></Svg>;
const icoSnap = <Svg w={26}><Target x={10} y={10} r={5.5} /><path d="M13 13H24L20 18V24L17 21V18Z" fill="#999" stroke="#333" /></Svg>;
const icoBracket = <Svg w={26}><path d="M5 2H1.500V20H5M17 2H20.500V9M20 13L16 16L20 19M16 16Q25 15 24 23" stroke={dim} strokeWidth="1.200" /><Target x={10.5} y={10.5} c="#aaa" d="#aaa" /></Svg>;
const icoHex = <Svg w={24}><path d="M6 1.500H18L23.500 12L18 22.500H6L0.500 12Z" stroke={dim} strokeWidth="1.200" /></Svg>;
const icoCubeT = <Svg w={24}><path d="M1 6L10 1L19 6L10 11ZM1 6V16L10 21V11M19 6V12" stroke={dim} strokeWidth="1.200" /><Target x={17} y={17} c="#aaa" d="#aaa" r={3.5} /></Svg>;
const icoRectT = <Svg w={24}><path d="M12 16.500H0.500V0.500H16.500V12" stroke={dim} strokeWidth="1.200" /><Target x={16.5} y={16.5} c="#aaa" d="#aaa" r={3.5} /></Svg>;
const winFrame = <path d="M0.500 0.500H23.500V23.500H0.500ZM0.500 4.500H23.500M15 2.500H16M18 2.500H19M21 2.500H22" stroke="#444" strokeWidth="1.200" />;
const icoWinZoom = <Svg w={24}>{winFrame}<path d="M4.500 20V7.500H18V12M4.500 20H8" stroke={orange} strokeWidth="1.300" /><circle cx="16" cy="14" r="5" fill="#fff" stroke="#444" strokeWidth="1.300" /><path d="M12 18L7 23" stroke="#444" strokeWidth="2.500" /></Svg>;
const icoWinRot = <Svg w={24}>{winFrame}<path d="M17 9A6.500 6.500 0 1 0 18.500 14M17.500 6V10H13.500" stroke="#444" strokeWidth="1.300" /><circle cx="12" cy="14" r="1.500" fill="#444" /></Svg>;
const icoCube = <Svg w={24}><Cube /></Svg>;
const icoCubeGear = (
  <Svg w={26}>
    <Cube s={0.75} a="#e8e8e8" b="#ddd" d="#f4f4f4" c="#c4c4c4" />
    <circle cx="18" cy="18" r="6.500" fill="#fff" stroke="#bbb" strokeWidth="1.800" strokeDasharray="2.500 2.600" />
    <circle cx="18" cy="18" r="5" fill="#fff" stroke="#bbb" strokeWidth="1.200" /><circle cx="18" cy="18" r="2" stroke="#bbb" />
  </Svg>
);
const icoFit = <Svg w={24}>{winFrame}<path d="M3.500 11V7.500H7M3.500 7.500L9 12M20.500 11V7.500H17M20.500 7.500L15 12M3.500 17V21H7M3.500 21L9 16M20.500 17V21H17M20.500 21L15 16" stroke="#444" strokeWidth="1.200" /></Svg>;
const icoShoe = <Svg w={25} h={24}><Shoe /></Svg>;
const icoPrism = <Svg w={24}><path d="M1 7L12 1L23 7V18Q19 23 12 23Q5 23 1 18Z" fill="#c9c9c9" stroke="#444" /><path d="M18 11L23 7V18Q21 21 18 22Z" fill="#8f8f8f" stroke="#444" /><path d="M1 7Q4 12 8 11H18L23 7L12 1Z" fill="#dedede" stroke="#444" /><path d="M8 11V22" stroke="#444" /></Svg>;
const icoEyeList = <Svg w={26} h={24}><Eye x={12} y={7.5} /><rect x="13.500" y="9.500" width="11" height="14" fill="#fff" stroke="#444" /><path d="M15.500 13H18M19.500 13H23M15.500 17H18M19.500 17H23M15.500 21H18M19.500 21H23" stroke="#444" strokeWidth="1.500" /></Svg>;

/* ---------- strip icons ---------- */

const g1 = '#b8b8b8';
const big = [
  <Svg w={26}><path d="M1 14Q4 4 14 1L24 5Q20 10 18 14L10 17V20L1 16Z" fill="#cfcfcf" /><path d="M11.500 11V24.500H24.500Q24 14 11.500 11M15 21L21 15M17 15H21V19" fill="#fff" stroke="#a5a5a5" /></Svg>,
  <Svg w={24}><path d="M8 1H22L17 6H3ZM3 10L8 7H15M3 14H14M3 18H14M3 22H14" fill="#f4f4f4" stroke={g1} /><path d="M12.500 9H20V20H12.500ZM14 12H19M14 15H19" fill="#dedede" stroke={g1} /></Svg>,
  <Svg w={20}><path d="M1 9L9 2V6H19V13H9V17Z" fill="#e0e0e0" stroke={dim} /></Svg>,
  <Svg w={20}><path d="M19 9L11 2V6H1V13H11V17Z" fill="#e0e0e0" stroke={dim} /></Svg>,
  <Svg w={24}><rect width="24" height="24" fill="#f4f4f4" /><path d="M4 12L12 4V8H19V17H12V20Z" fill="#c4c4c4" stroke="#909090" /></Svg>,
  <Svg w={24}><rect width="24" height="24" fill="#f4f4f4" /><path d="M20 12L12 4V8H5V17H12V20Z" fill="#c4c4c4" stroke="#909090" /></Svg>,
  <Svg w={24}><path d="M1 14L14 2L23 7V12L10 22L1 17Z" fill="#c4c4c4" stroke="#c0c0c0" /><path d="M3 14L15 3M9 17L22 8" stroke="#f4f4f4" strokeWidth="2" /><path d="M10 22L23 12V8L10 18Z" fill="#a9a9a9" /></Svg>,
  <Svg w={24}><path d="M1 12Q4 2 14 3Q24 5 23 13Q22 21 16 21Q13 20 14 17Q10 18 6 17Q1 16 1 12Z" fill="#eee" stroke={g1} /><circle cx="7" cy="10" r="2" fill={g1} /><circle cx="12" cy="6.500" r="2" fill={g1} /><circle cx="18" cy="9" r="2" fill={g1} /><circle cx="18" cy="15" r="2" fill={g1} /></Svg>,
  <Svg w={24}><path d="M2 4Q8 5 12 1Q17 5 22 4Q18 8 14 7ZM2 20Q7 19 10 16L22 20Q16 20 12 23Q8 20 2 20Z" fill="#dedede" stroke={g1} /><path d="M7 7H12V15H7ZM10 9H16L18 11V18H10Z" fill="#f4f4f4" stroke={g1} /></Svg>,
  <Svg w={24}><rect x="3" y="3" width="10" height="12" rx="1.500" fill="#f4f4f4" stroke="#a9a9a9" strokeWidth="1.300" /><rect x="9" y="9" width="12" height="13" rx="1.500" fill="#f4f4f4" stroke="#a9a9a9" strokeWidth="1.500" /><path d="M9 13H21M11 16H14M16 16H19M11 19H14M16 19H19M15 6V3M18 7L21 4M5 6H8" stroke="#a9a9a9" /></Svg>,
];
const icoDrillFan = <Svg w={16}><Drill x={4} y={1} w={4} h={10} f="#ccc" l={g1} /><path d="M8 5L15 4L11 8H8M2 12L5 15M7 12V15" stroke={g1} strokeWidth="1.300" /></Svg>;
const icoDrillCheck = <Svg w={16}><Drill x={2} y={0} w={3} h={8} f="#ccc" l={g1} /><path d="M5 8L9 13L15 5" stroke={g1} strokeWidth="2.500" /></Svg>;
const icoDrillArrow = <Svg w={16}><Drill x={2} y={1} w={3} h={12} f="#ccc" l={g1} /><path d="M5 12H10M9 10H15M13 8.500L15 10L13 12" stroke={g1} strokeWidth="1.300" /></Svg>;
const icoDrillP = <Svg w={16}><rect width="16" height="16" fill="#f6f6f6" /><Drill x={2} y={1} w={3} h={12} f="#ccc" l={g1} /><path d="M8.500 7V1.500H11Q13 3 11 4.500H8.500M5 13H10M9 10.500H15M13 9L15 10.500L13 12.500" stroke={g1} strokeWidth="1.300" /></Svg>;
const icoDrillStep = <Svg w={16}><Drill x={1} y={1} w={3} h={9} f="#ccc" l={g1} /><path d="M4 5H8M7 9H11V12H15V15" stroke={g1} strokeWidth="1.800" /></Svg>;
const icoFlip = <Svg w={16}><path d="M1 9L9 1L11 6L3 14ZM5 11L13 3L15 8L7 15Z" fill="#eee" stroke={g1} /></Svg>;
const icoPartS = <Svg w={16}><path d="M0.500 6H4V13H12V6H15.500V15.500H0.500Z" fill="#ccc" stroke="#aaa" /><path d="M3 1H13V4H3Z" fill="#a0a0a0" /><Drill x={6} y={4} w={4} h={9} f="#eee" l="#aaa" /></Svg>;
const grayPairs = [icoPartS, icoDrillFan, icoManage, icoDrillCheck, icoDrillArrow, icoDrillP, icoDrillStep, icoFlip, icoSim, icoBolt];
const livePairs = [
  <Svg w={16}><path d="M0.500 8Q3 3 8 3Q13 3 15.500 8Q13 13 8 13Q3 13 0.500 8Z" stroke="#333" strokeWidth="1.200" /><circle cx="8" cy="8" r="2.500" stroke="#333" /><path d="M1 15L15 1" stroke="#333" strokeWidth="1.200" /></Svg>,
  <Svg w={16}><Shoe s={0.66} /></Svg>,
  <Svg w={16}><Shoe s={0.66} /><ellipse cx="8.500" cy="10" rx="3" ry="2" fill="#ddd" stroke="#444" /></Svg>,
  <Svg w={16}><path d="M4 1.500H1V14.500H4M12 1.500H15V14.500H12" stroke={orange} strokeWidth="1.400" /><Eye x={8} y={8} s={0.48} /></Svg>,
  <Svg w={16}><path d="M1 12L12 1L15 4L4 15ZM4 9L6 11M7 6L9 8M10 3L12 5" stroke="#444" strokeWidth="1.200" /></Svg>,
  <Svg w={16}><path d="M0.500 4.500Q3 1 6 1Q9 1 11.500 4.500Q9 8 6 8Q3 8 0.500 4.500Z" stroke="#333" /><Eye x={10} y={12} s={0.52} /><path d="M1 14L15 1" stroke="#333" strokeWidth="1.200" /></Svg>,
  <Svg w={16}><SPath x={0.5} y={1} w={4.5} h={12} /><path d="M8 9Q11 5 15 8V5M15 11Q12 16 8 13V16" stroke="#444" strokeWidth="1.200" /></Svg>,
  <Svg w={16}><rect x="5" y="0.500" width="6" height="10" rx="3" stroke="#444" fill="#ccc" /><path d="M2.500 7Q2.500 12.500 8 12.500Q13.500 12.500 13.500 7M8 12V15M5 15.500H11" stroke="#444" strokeWidth="1.200" /></Svg>,
  <Svg w={16}><path d="M0 6.500H6M0 10.500H5M1 14.500H6" stroke="#3fa0e0" strokeWidth="1.500" /><path d="M10 4L12 8L16 8.500L13 11.500L14 16L10 13.500L6 16L7 11.500L4 8.500L8 8Z" fill="#ffd83c" stroke="#e0a010" /><path d="M5 4L9 1H13V4L10 6Z" fill="#e0b080" /><circle cx="13.500" cy="2.500" r="2" fill="#3a4ae0" /></Svg>,
  <Svg w={16}><SPath x={1} y={1} w={5} h={12} /><Target x={11.5} y={5} r={2.5} c={orange} d={orange} /></Svg>,
];

const MoveIco = <Svg w={25} h={26}><Axes x={1} y={1} s={0.9} /><path d="M16.500 9V23M9.500 16.500H24M14 11L16.500 8.500L19 11M14 22L16.500 24.500L19 22M12 14L9.500 16.500L12 19M21.500 14L24 16.500L21.500 19" stroke="#444" strokeWidth="1.200" /></Svg>;
const ShowWcsIco = <Svg w={25} h={26}><Axes x={0} y={1} s={0.9} /><Eye x={16} y={18.5} s={0.7} bg="#cde6eb" /></Svg>;
const SaveIco = <Svg w={25} h={26}><Axes x={0} y={1} s={0.9} /><path d="M10.500 10.500H20L23.500 14V23.500H10.500ZM13.500 10.500V15H20V10.500M13 23V18.500H21V23M15 21H19" fill="#fff" stroke="#444" strokeWidth="1.200" /></Svg>;

/* ---------- watermarks ---------- */

const Activate = styled.div`
  position: absolute;
  right: -7px;
  bottom: 36px;
  width: 20px;
  font-size: 15px;
  line-height: 24px;
  color: #a8a8a8;
  pointer-events: none;
`;

const Credit = styled.div`
  position: absolute;
  right: 0;
  bottom: 4px;
  width: 186px;
  overflow: hidden;
  white-space: nowrap;
  font: 15px/18px "Liberation Serif", "Noto Sans CJK SC", serif;
  color: rgba(90, 90, 90, 0.7);
  pointer-events: none;
`;

const Page = styled.div`
  position: relative;
  overflow: hidden;
`;

const menus: [string, string][] = [['视图', 'V'], ['插入', 'S'], ['格式', 'R'], ['工具', 'T'], ['装配', 'A'], ['信息', 'I'], ['分析', 'L'], ['首选项', 'P'], ['应用模块', 'N'], ['星空 V8.110', ''], ['帮助', 'H']];

export default function App() {
  return (
    <Page>
      <Global />
      <Shell>
        <ProfileDialog />
        <AppWindow>
          <MenuBar>
            <Caret c="#fff" w={6} />
            {menus.map(([t, k]) => (
              <MenuItem key={t}><span>{t}{k && <>(<u>{k}</u>)</>}</span><Caret c="#fff" w={6} /></MenuItem>
            ))}
            <MenuMark><Svg w={16} vb="0 0 24 24"><Shoe /></Svg></MenuMark>
            <MenuSep />
            <MenuMark><Svg w={16}><path d="M1 1H16V6H1ZM4 6V11H16V7M1 1V8H4M8 11V14H16" stroke="#3f9fc0" strokeWidth="1.200" /></Svg></MenuMark>
          </MenuBar>
          <TabBar>
            {['视图', '应用模块', '工具', '机明软件', '星空-常用工具', '星空 V8.110'].map((t) => <Tab key={t}>{t}</Tab>)}
            <Search aria-label="搜索" placeholder="在此输入以搜索" />
          </TabBar>
          <Ribbon>
            <RibbonGroup $w={160}>
              <Tools>
                <CutText $w={25}><span>查</span><b>轨</b></CutText>
                <Stack $w={87} $gap={4} $top={3} $left={6}>
                  <Tool $on $h={32}>{icoSelPath}选择刀轨</Tool>
                  <Tool disabled $h={32}>{icoPost}后处理</Tool>
                </Stack>
                <BigTool $w={47}>{icoMore}更多<Caret /></BigTool>
              </Tools>
              <GroupFoot><span /><Caret /></GroupFoot>
            </RibbonGroup>
            <RibbonGroup $w={257}>
              <Tools $pad={9}>
                <BigTool $w={51} $on>{icoShowPath}显示刀轨</BigTool>
                <Stack $w={106} $left={2}>
                  <Tool disabled>{icoReport}刀轨报告</Tool>
                  <Tool $on>{icoShowCut}显示切削移动</Tool>
                  <Tool $on>{icoShowNon}显示非切削移动</Tool>
                </Stack>
                <BigTool $w={43}>{icoCutter}刀具<Caret /></BigTool>
                <BigTool $w={47}>{icoDisplay}更多<Caret /></BigTool>
              </Tools>
              <GroupFoot><span>显示</span><Caret /></GroupFoot>
            </RibbonGroup>
            <RibbonGroup $w={231}>
              <Tools $pad={7}>
                <Stack $w={103} $gap={8} $top={8}>
                  <Tool disabled $h={32}>{icoElectrode}电极自动编程</Tool>
                  <Tool disabled $h={32}>{icoPartProg}零件编程</Tool>
                </Stack>
                <Stack $w={94}>
                  <Tool disabled>{icoTrimS}指定修剪边界</Tool>
                  <Tool disabled>{icoPoints}指定下刀点</Tool>
                  <Tool disabled>{icoManage}刀路管理</Tool>
                </Stack>
                <Stack $w={24}>
                  <Tool disabled aria-label="刀柄">{icoBolt}</Tool>
                  <Tool disabled aria-label="仿真">{icoSim}</Tool>
                  <Tool disabled aria-label="打印">{icoPrintS}</Tool>
                </Stack>
              </Tools>
            </RibbonGroup>
            <RibbonGroup $w={67}>
              <Tools><BigTool $w={66} disabled>{icoTransform}变换对象<Caret /></BigTool></Tools>
              <GroupFoot><span>特征</span><Caret /></GroupFoot>
            </RibbonGroup>
            <RibbonGroup $w={60}>
              <Tools><BigTool $w={46}><Svg w={4} h={32}>{null}</Svg>显示</BigTool></Tools>
            </RibbonGroup>
          </Ribbon>
          <SelectBar>
            <Select id="scope" w={45} h={22} value="" label="选择范围" />
            <FilterButton>{icoFilter}常规选择过滤器<Caret w={6} /></FilterButton>
            <Slot $w={33} aria-label="捕捉">{icoSnap}</Slot>
            <Slot $w={33} aria-label="返回选择">{icoBracket}</Slot>
            <Slot $w={33} aria-label="多边形">{icoHex}</Slot>
            <Slot $w={33} aria-label="体">{icoCubeT}</Slot>
            <Slot $w={33} aria-label="矩形">{icoRectT}</Slot>
            <Slot $w={14} aria-label="更多选项"><Caret w={6} /></Slot>
            <BarSep $l={7} $r={7} />
            <Slot $w={33} aria-label="缩放">{icoWinZoom}</Slot>
            <Slot $w={33} aria-label="旋转">{icoWinRot}</Slot>
            <Slot $w={33} aria-label="定向">{icoCube}</Slot>
            <Slot $w={33} aria-label="设置">{icoCubeGear}</Slot>
            <Slot $w={33} aria-label="适合窗口">{icoFit}</Slot>
            <Slot $w={14} aria-label="适合选项"><Caret w={6} /></Slot>
            <Slot $w={34} aria-label="着色">{icoShoe}</Slot>
            <Slot $w={14} aria-label="着色选项"><Caret w={6} /></Slot>
            <Slot $w={34} aria-label="视图">{icoPrism}</Slot>
            <Slot $w={14} aria-label="视图选项"><Caret w={6} /></Slot>
            <Slot $w={34} aria-label="显示和隐藏">{icoEyeList}</Slot>
            <Slot $w={14} aria-label="显示选项"><Caret w={6} /></Slot>
            <BarSep $l={7} $r={9} />
            <McsButton aria-label="MCS">
              <Svg w={36} h={28}>
                <path d="M3 3V17" stroke="#2a87a8" strokeWidth="1.300" /><path d="M3 17L15 10" stroke="#1fae3c" strokeWidth="1.300" /><path d="M3 17L12 22" stroke="#ee1c3c" strokeWidth="1.300" />
                <text x="9" y="9" fontSize="8" fontWeight="700" fill="#333">MCS</text>
                <Eye x={19} y={22} s={0.7} bg="#cde6eb" />
              </Svg>
            </McsButton>
          </SelectBar>
          <Work>
            <ViewColumn><ViewEdge><View><Scene /></View></ViewEdge></ViewColumn>
            <Strip>
              {big.map((b, i) => <StripBig key={i} aria-label={`工具 ${i + 1}`}>{b}</StripBig>)}
              <StripPair>{grayPairs.map((b, i) => <button key={i} disabled aria-label={`操作 ${i + 1}`}>{b}</button>)}</StripPair>
              <StripLine />
              <StripPair>{livePairs.map((b, i) => <button key={i} aria-label={`命令 ${i + 1}`}>{b}</button>)}</StripPair>
              <StripLine />
              <StripMore aria-label="更多"><Svg w={4} h={7}><path d="M4 0V7L0 3.500Z" fill="#1e1e1e" /></Svg></StripMore>
            </Strip>
            <OperationNavigator />
          </Work>
          <BottomBar>
            <CutText $w={29} $pad={5}><span>述</span></CutText>
            <BottomTool>{MoveIco}WCS 动态</BottomTool>
            <BottomTool $on>{ShowWcsIco}显示 WCS</BottomTool>
            <BottomTool>{SaveIco}保存 WCS</BottomTool>
            <BottomTool disabled><Svg w={25} h={26}><Wrench x={0} y={1} s={1.5} c="#c8c8c8" f="#e8e8e8" /></Svg>系统参数设置</BottomTool>
            <BottomTool disabled><Printer />批量打印</BottomTool>
            <BarSep $l={2} $r={0} $h={26} />
          </BottomBar>
          <Status>进给率 = 2000.000, XM = 25.890, YM = 72.814, ZM = 51.500, i = 0.000, j = 0.000, k = 1.000</Status>
        </AppWindow>
      </Shell>
      <Activate>激<br />转</Activate>
      <Credit>UG爱好者论坛@這刻莪等袮</Credit>
    </Page>
  );
}
